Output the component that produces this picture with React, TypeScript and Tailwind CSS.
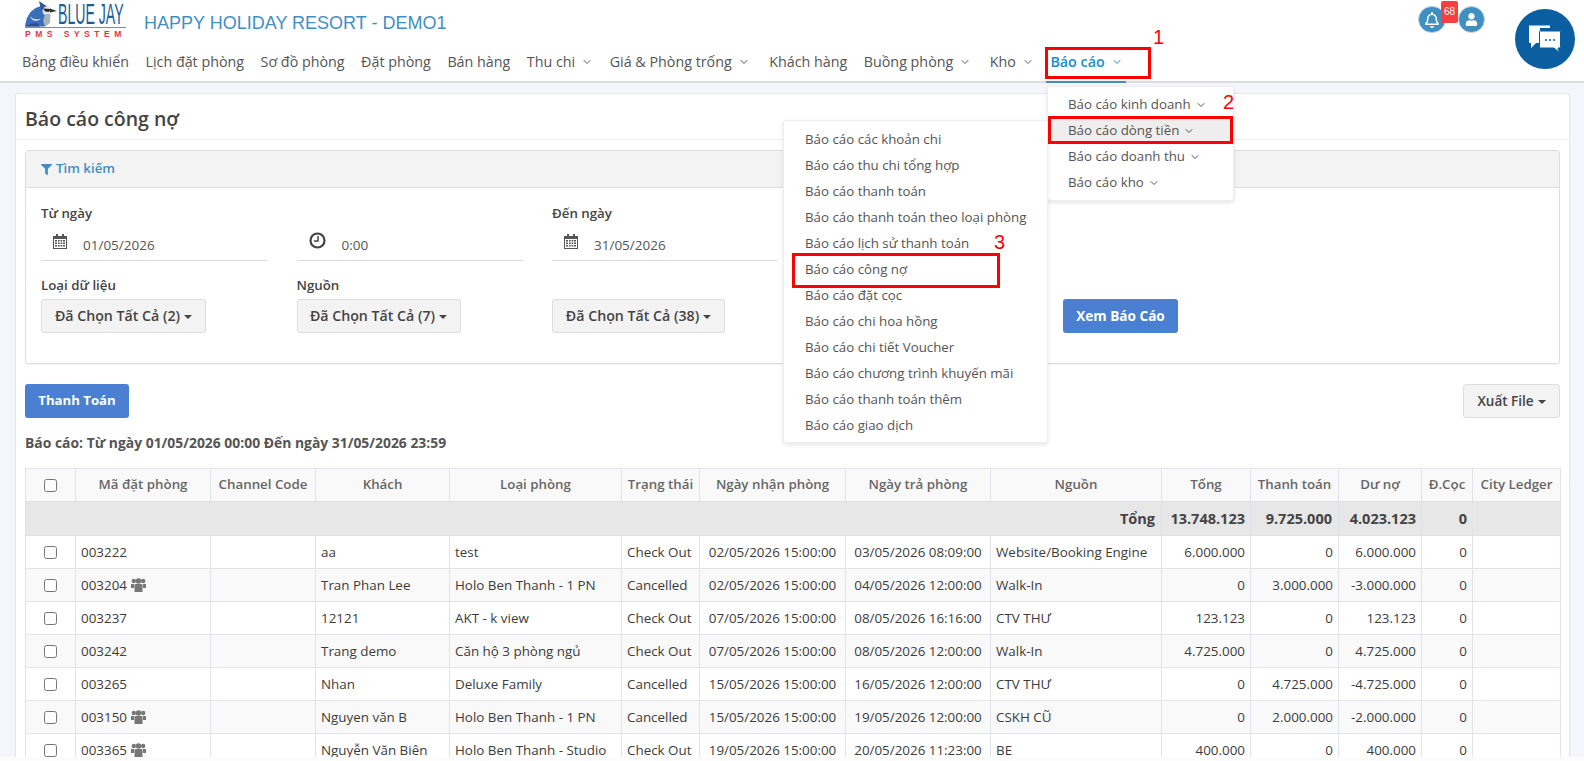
import React from "react";
import { ChevronDown } from "lucide-react";
import { FaFilter, FaRegBell, FaUser } from "react-icons/fa";

const nav: [string, boolean, string][] = [
  ["Bảng điều khiển", false, ""],
  ["Lịch đặt phòng", false, ""],
  ["Sơ đồ phòng", false, ""],
  ["Đặt phòng", false, ""],
  ["Bán hàng", false, ""],
  ["Thu chi", true, ""],
  ["Giá & Phòng trống", true, "pr-[3px]"],
  ["Khách hàng", false, ""],
  ["Buồng phòng", true, "pr-[2px]"],
  ["Kho", true, ""],
];

const sub = ["Báo cáo kinh doanh", "Báo cáo dòng tiền", "Báo cáo doanh thu", "Báo cáo kho"];
const reports = [
  "Báo cáo các khoản chi",
  "Báo cáo thu chi tổng hợp",
  "Báo cáo thanh toán",
  "Báo cáo thanh toán theo loại phòng",
  "Báo cáo lịch sử thanh toán",
  "Báo cáo công nợ",
  "Báo cáo đặt cọc",
  "Báo cáo chi hoa hồng",
  "Báo cáo chi tiết Voucher",
  "Báo cáo chương trình khuyến mãi",
  "Báo cáo thanh toán thêm",
  "Báo cáo giao dịch",
];

const heads = ["Mã đặt phòng", "Channel Code", "Khách", "Loại phòng", "Trạng thái", "Ngày nhận phòng", "Ngày trả phòng", "Nguồn", "Tổng", "Thanh toán", "Dư nợ", "Đ.Cọc", "City Ledger"];

const rows = [
  ["003222", false, "aa", "test", "Check Out", "02/05/2026 15:00:00", "03/05/2026 08:09:00", "Website/Booking Engine", "6.000.000", "0", "6.000.000"],
  ["003204", true, "Tran Phan Lee", "Holo Ben Thanh - 1 PN", "Cancelled", "02/05/2026 15:00:00", "04/05/2026 12:00:00", "Walk-In", "0", "3.000.000", "-3.000.000"],
  ["003237", false, "12121", "AKT - k view", "Check Out", "07/05/2026 15:00:00", "08/05/2026 16:16:00", "CTV THƯ", "123.123", "0", "123.123"],
  ["003242", false, "Trang demo", "Căn hộ 3 phòng ngủ", "Check Out", "07/05/2026 15:00:00", "08/05/2026 12:00:00", "Walk-In", "4.725.000", "0", "4.725.000"],
  ["003265", false, "Nhan", "Deluxe Family", "Cancelled", "15/05/2026 15:00:00", "16/05/2026 12:00:00", "CTV THƯ", "0", "4.725.000", "-4.725.000"],
  ["003150", true, "Nguyen văn B", "Holo Ben Thanh - 1 PN", "Cancelled", "15/05/2026 15:00:00", "19/05/2026 12:00:00", "CSKH CŨ", "0", "2.000.000", "-2.000.000"],
  ["003365", true, "Nguyễn Văn Biên", "Holo Ben Thanh - Studio", "Check Out", "19/05/2026 15:00:00", "20/05/2026 11:23:00", "BE", "400.000", "0", "400.000"],
] as const;

function Bird() {
  return (
    <svg width="33" height="26" viewBox="0 0 33 26" className="shrink-0">
      <path d="M0 25.500 C1 14 8 6 17 5 L21 11 L25 21 L20 25.500 Z" fill="#3a6dbd" />
      <path d="M0 25.500 C4 23 8 22 12 22 L15 25.500 Z" fill="#2a4f8f" />
      <path d="M14 0 L20 4 L25 8 L16 9 Z" fill="#33589a" />
      <circle cx="22" cy="10" r="4.500" fill="#e3e7ea" />
      <path d="M18 7.500 L26 8 L24 11 L20 10.500 Z" fill="#2a2a2a" />
      <path d="M25 7.500 L32 10 L25 11.500 Z" fill="#333" />
      <path d="M20 13 L25.500 13 L25 22 L20 25.500 L18 20 Z" fill="#a8b2ba" />
      <path d="M5 15 C8 19 12 19 16 17.500 C12 21 7 20.500 5 15 Z" fill="#fff" />
    </svg>
  );
}

function Cal() {
  return (
    <svg width="14" height="15" viewBox="0 0 14 15" fill="#555">
      <path d="M3 0h2v2H9V0h2v2h3v13H0V2h3zM1 5v9h12V5z" />
      <path d="M2 6h2v1.500H2zM5 6h1.700v1.500H5zM7.600 6h1.700v1.500H7.600zM10 6h2v1.500h-2zM2 8.500h2V10H2zM5 8.500h1.700V10H5zM7.600 8.500h1.700V10H7.600zM10 8.500h2V10h-2zM2 11h2v1.500H2zM5 11h1.700v1.500H5zM7.600 11h1.700v1.500H7.600zM10 11h2v1.500h-2z" />
    </svg>
  );
}

function Clock() {
  return (
    <svg width="17" height="17" viewBox="0 0 17 17" fill="none" stroke="#444">
      <circle cx="8.500" cy="8.500" r="7" strokeWidth="2.200" />
      <path d="M9 4 V9 H5" strokeWidth="1.500" />
    </svg>
  );
}

function Users() {
  return (
    <svg width="15" height="14" viewBox="0 0 15 14" fill="#777" className="shrink-0">
      <circle cx="2.800" cy="3" r="2.200" />
      <circle cx="12.200" cy="3" r="2.200" />
      <circle cx="7.500" cy="3" r="2.800" />
      <path d="M0 6 H3 V10 H0 Z M12 6 H15 V10 H12 Z" />
      <path d="M3.500 7 Q3.500 6 4.500 6 H10.500 Q11.500 6 11.500 7 V14 H3.500 Z" />
    </svg>
  );
}

function ChatIcon() {
  return (
    <svg width="34" height="30" viewBox="0 0 34 30">
      <path d="M1 1.500 H22 V4 H12 V19 H8 L3 24 V19 H1 Z" fill="#fff" />
      <path d="M11.500 8 Q11.500 7 12.500 7 H31.500 Q32.500 7 32.500 8 V23 Q32.500 24 31.500 24 H30 L31.500 28.500 L26 24 H12.500 Q11.500 24 11.500 23 Z" fill="#fff" stroke="#0b5fa0" strokeWidth="1" />
      <circle cx="18" cy="16" r="1" fill="#0b5fa0" />
      <circle cx="22" cy="16" r="1" fill="#0b5fa0" />
      <circle cx="26" cy="16" r="1" fill="#0b5fa0" />
    </svg>
  );
}

function DateField({ time, value }: { time?: boolean; value: string }) {
  return (
    <div className="flex items-center w-[226px] h-[36px] border-b border-[#ddd] pl-[12px] gap-[9px]">
      <span className={`flex justify-start ${time ? "w-[24px] -mt-[4px]" : "w-[21px] -mt-[2px]"}`}>{time ? <Clock /> : <Cal />}</span>
      <span className="text-[13.500px] text-[#555] mt-[6px]">{value}</span>
    </div>
  );
}

function Drop({ w, label }: { w: string; label: string }) {
  return (
    <button className={`${w} h-[34px] flex items-center justify-center gap-[4px] rounded-[3px] border border-[#ddd] bg-[#f3f3f3] text-[14.200px] font-semibold text-[#444]`}>
      {label}
      <span className="mt-[2px] border-x-[4px] border-t-[4px] border-x-transparent border-t-[#444]" />
    </button>
  );
}

const cellBorder = "border border-[#e1e3ea]";

export default function App() {
  return (
    <div className="relative h-[761px] overflow-hidden flex flex-col bg-[#f4f6fb] font-['Open_Sans','Noto_Sans',sans-serif] text-[#333]">
      <header className="bg-white border-b-2 border-[#dcdcdc] h-[83px] shrink-0">
        <div className="h-[46px] flex items-start pl-[25px]">
          <div className="w-[101px] pt-[2px] leading-none">
            <div className="flex items-end h-[26px] border-b border-[#8a8a8a]">
              <Bird />
              <span className="inline-block w-[68px] origin-left scale-x-[0.47] whitespace-nowrap text-[30px] leading-[26px] font-['Liberation_Sans',sans-serif] text-[#1b5e93]">BLUE JAY</span>
            </div>
            <div className="mt-[2px] text-[8.500px] font-bold tracking-[4.500px] whitespace-nowrap font-['Liberation_Sans',sans-serif] text-[#e8343c]">PMS SYSTEM</div>
          </div>
          <div className="ml-[18px] mt-[12px] text-[18px] leading-[22px] font-['Liberation_Sans',sans-serif] text-[#3f8fc5] whitespace-nowrap">HAPPY HOLIDAY RESORT - DEMO1</div>
        </div>
        <nav className="h-[35px] flex items-center pl-[22px] text-[14.300px] text-[#555] gap-[16.500px] pb-[3px]">
          {nav.map(([t, c, extra]) => (
            <span key={t} className={`flex items-center gap-[6px] whitespace-nowrap ${extra}`}>
              {t}
              {c && <ChevronDown size={12} strokeWidth={2} />}
            </span>
          ))}
          <span className="relative flex items-center gap-[6px] whitespace-nowrap font-semibold text-[#1a8ccc]">
            Báo cáo <ChevronDown size={12} strokeWidth={2} />
          </span>
        </nav>
      </header>

      <main className="flex-1 min-h-0 overflow-hidden pl-[15px] pr-[14px] pt-[10px]">
        <section className="bg-white border-t border-x border-[#e4e6ec] rounded-t-[3px] h-full">
          <h1 className="h-[46px] flex items-center pl-[9px] pt-[4px] border-b border-[#eee] text-[19.500px] font-semibold text-[#444]">Báo cáo công nợ</h1>
          <div className="px-[9px] pt-[10px]">
            <div className="h-[214px] border border-[#ddd] rounded-[3px] shadow-[0_1px_1px_rgba(0,0,0,0.05)]">
              <div className="h-[37px] flex items-center gap-[4px] pl-[15px] bg-[#f3f3f3] border-b border-[#ddd] text-[13.300px] font-semibold text-[#3f8fc5]">
                <FaFilter className="text-[11px]" /> Tìm kiếm
              </div>
              <div className="pl-[15px] pt-[15px] grid grid-cols-[255.500px_255.500px_255.500px_255.500px_auto]">
                <div>
                  <div className="text-[13.300px] font-semibold text-[#444] h-[22px] leading-[20px]">Từ ngày</div>
                  <DateField value="01/05/2026" />
                </div>
                <div className="pt-[22px]">
                  <DateField time value="0:00" />
                </div>
                <div>
                  <div className="text-[13.300px] font-semibold text-[#444] h-[22px] leading-[20px]">Đến ngày</div>
                  <DateField value="31/05/2026" />
                </div>
                <div />
                <div />
                <div className="mt-[13px]">
                  <div className="text-[13.300px] font-semibold text-[#444] h-[25px] leading-[22px]">Loại dữ liệu</div>
                  <Drop w="w-[165px]" label="Đã Chọn Tất Cả (2)" />
                </div>
                <div className="mt-[13px]">
                  <div className="text-[13.300px] font-semibold text-[#444] h-[25px] leading-[22px]">Nguồn</div>
                  <Drop w="w-[164px]" label="Đã Chọn Tất Cả (7)" />
                </div>
                <div className="mt-[13px] pt-[25px]">
                  <Drop w="w-[173px]" label="Đã Chọn Tất Cả (38)" />
                </div>
                <div />
                <div className="mt-[13px] pt-[25px]">
                  <button className="w-[115px] h-[34px] rounded-[3px] bg-[#4a7fd1] text-[13.600px] font-bold text-white">Xem Báo Cáo</button>
                </div>
              </div>
            </div>
            <div className="mt-[20px] flex justify-between">
              <button className="w-[104px] h-[34px] rounded-[3px] bg-[#4a7fd1] text-[13.200px] font-bold text-white">Thanh Toán</button>
              <button className="w-[97px] h-[34px] flex items-center justify-center gap-[4px] rounded-[3px] border border-[#ddd] bg-[#f3f3f3] text-[13.500px] font-semibold text-[#444]">
                Xuất File <span className="mt-[2px] border-x-[4px] border-t-[4px] border-x-transparent border-t-[#444]" />
              </button>
            </div>
            <p className="mt-[15px] h-[20px] leading-[20px] text-[13.900px] font-bold text-[#555]">Báo cáo: Từ ngày 01/05/2026 00:00 Đến ngày 31/05/2026 23:59</p>
            <table className="mt-[15px] w-[1535px] table-fixed border-collapse text-[13.400px] text-[#3c3c3c]">
              <colgroup>
                <col className="w-[50px]" /><col className="w-[135px]" /><col className="w-[105px]" /><col className="w-[134px]" /><col className="w-[172px]" /><col className="w-[78px]" /><col className="w-[146px]" /><col className="w-[145px]" /><col className="w-[171px]" /><col className="w-[89px]" /><col className="w-[88px]" /><col className="w-[83px]" /><col className="w-[51px]" /><col className="w-[88px]" />
              </colgroup>
              <thead>
                <tr className="h-[33px] bg-[#f9f9f9]">
                  <th className={cellBorder}><input type="checkbox" className="block mx-auto w-[13px] h-[13px]" /></th>
                  {heads.map((h) => (
                    <th key={h} className={`${cellBorder} text-[13.300px] font-semibold text-[#666] whitespace-nowrap px-0`}>{h}</th>
                  ))}
                </tr>
              </thead>
              <tbody>
                <tr className="h-[34px] bg-[#e7e7e7] text-[14.500px] font-bold text-[#444]">
                  <td colSpan={9} className="border-y border-l border-[#e1e3ea] text-right pr-[6px]">Tổng</td>
                  <td className={`${cellBorder} text-right pr-[5px]`}>13.748.123</td>
                  <td className={`${cellBorder} text-right pr-[6px]`}>9.725.000</td>
                  <td className={`${cellBorder} text-right pr-[5px]`}>4.023.123</td>
                  <td className={`${cellBorder} text-right pr-[5px]`}>0</td>
                  <td className={cellBorder} />
                </tr>
                {rows.map((r, i) => (
                  <tr key={r[0]} className={`h-[33px] ${i % 2 ? "bg-[#f9f9f9]" : "bg-white"}`}>
                    <td className={cellBorder}><input type="checkbox" className="block mx-auto w-[13px] h-[13px]" /></td>
                    <td className={`${cellBorder} px-[5px] whitespace-nowrap`}>
                      <span className="inline-flex items-center gap-[4px]">{r[0]}{r[1] && <Users />}</span>
                    </td>
                    <td className={cellBorder} />
                    {[2, 3, 4, 5, 6, 7].map((k) => (
                      <td key={k} className={`${cellBorder} px-[5px] whitespace-nowrap ${k === 5 || k === 6 ? "text-center" : ""}`}>{r[k] as string}</td>
                    ))}
                    {[8, 9, 10].map((k) => (
                      <td key={k} className={`${cellBorder} px-[5px] text-right whitespace-nowrap`}>{r[k] as string}</td>
                    ))}
                    <td className={`${cellBorder} px-[5px] text-right`}>0</td>
                    <td className={cellBorder} />
                  </tr>
                ))}
              </tbody>
            </table>
          </div>
        </section>
      </main>
      <div className="h-[4px] shrink-0 bg-[#fcfcfc]" />

      {/* top-right widgets */}
      <div className="absolute left-[1418px] top-[6px] w-[28px] h-[27px] rounded-full bg-[#3f8fc0] border border-[#c5d5df] flex items-center justify-center text-white text-[16px]"><FaRegBell /></div>
      <div className="absolute left-[1441px] top-[1px] w-[17px] h-[22px] rounded-[2px] bg-[#f44040] flex items-center justify-center text-white text-[10px] leading-none font-['Liberation_Sans',sans-serif]">68</div>
      <div className="absolute left-[1458px] top-[6px] w-[27px] h-[27px] rounded-full bg-[#3f8fc0] border border-[#c5d5df] flex items-center justify-center text-white text-[13px]"><FaUser /></div>
      <div className="absolute left-[1515px] top-[9px] w-[60px] h-[60px] rounded-full bg-[#0b5fa0] flex items-center justify-center"><ChatIcon /></div>

      {/* menus */}
      <div className="absolute left-[1046px] top-[81px] w-[80px] h-[2px] bg-[#3f8fc0]" />
      <div className="absolute left-[1047px] top-[86px] w-[187px] h-[115px] py-[5px] bg-white rounded-[3px] border border-[#eee] shadow-[0_2px_4px_rgba(0,0,0,0.1)] text-[13.300px] text-[#555]">
        {sub.map((s, i) => (
          <div key={s} className={`h-[26px] flex items-center gap-[4px] pl-[20px] whitespace-nowrap ${i === 1 ? "bg-[#eeeeee]" : ""}`}>
            {s} <ChevronDown size={12} strokeWidth={2} />
          </div>
        ))}
      </div>
      <div className="absolute left-[783px] top-[120px] w-[265px] h-[323px] py-[6px] bg-white rounded-[3px] border border-[#eee] shadow-[0_2px_4px_rgba(0,0,0,0.1)] text-[13.300px] text-[#555]">
        {reports.map((s) => (
          <div key={s} className="h-[26px] flex items-center pl-[21px] whitespace-nowrap">{s}</div>
        ))}
      </div>

      {/* annotations */}
      <div className="absolute left-[1045px] top-[47px] w-[106px] h-[32px] border-[3px] border-[#f00]" />
      <div className="absolute left-[1048px] top-[116px] w-[185px] h-[28px] border-[3px] border-[#f00]" />
      <div className="absolute left-[792px] top-[253px] w-[208px] h-[35px] border-[3px] border-[#f00]" />
      <div className="absolute left-[1153px] top-[24px] text-[20px] leading-[26px] text-[#f00] font-['Liberation_Sans',sans-serif]">1</div>
      <div className="absolute left-[1223px] top-[89px] text-[20px] leading-[26px] text-[#f00] font-['Liberation_Sans',sans-serif]">2</div>
      <div className="absolute left-[994px] top-[229px] text-[20px] leading-[26px] text-[#f00] font-['Liberation_Sans',sans-serif]">3</div>
    </div>
  );
}
